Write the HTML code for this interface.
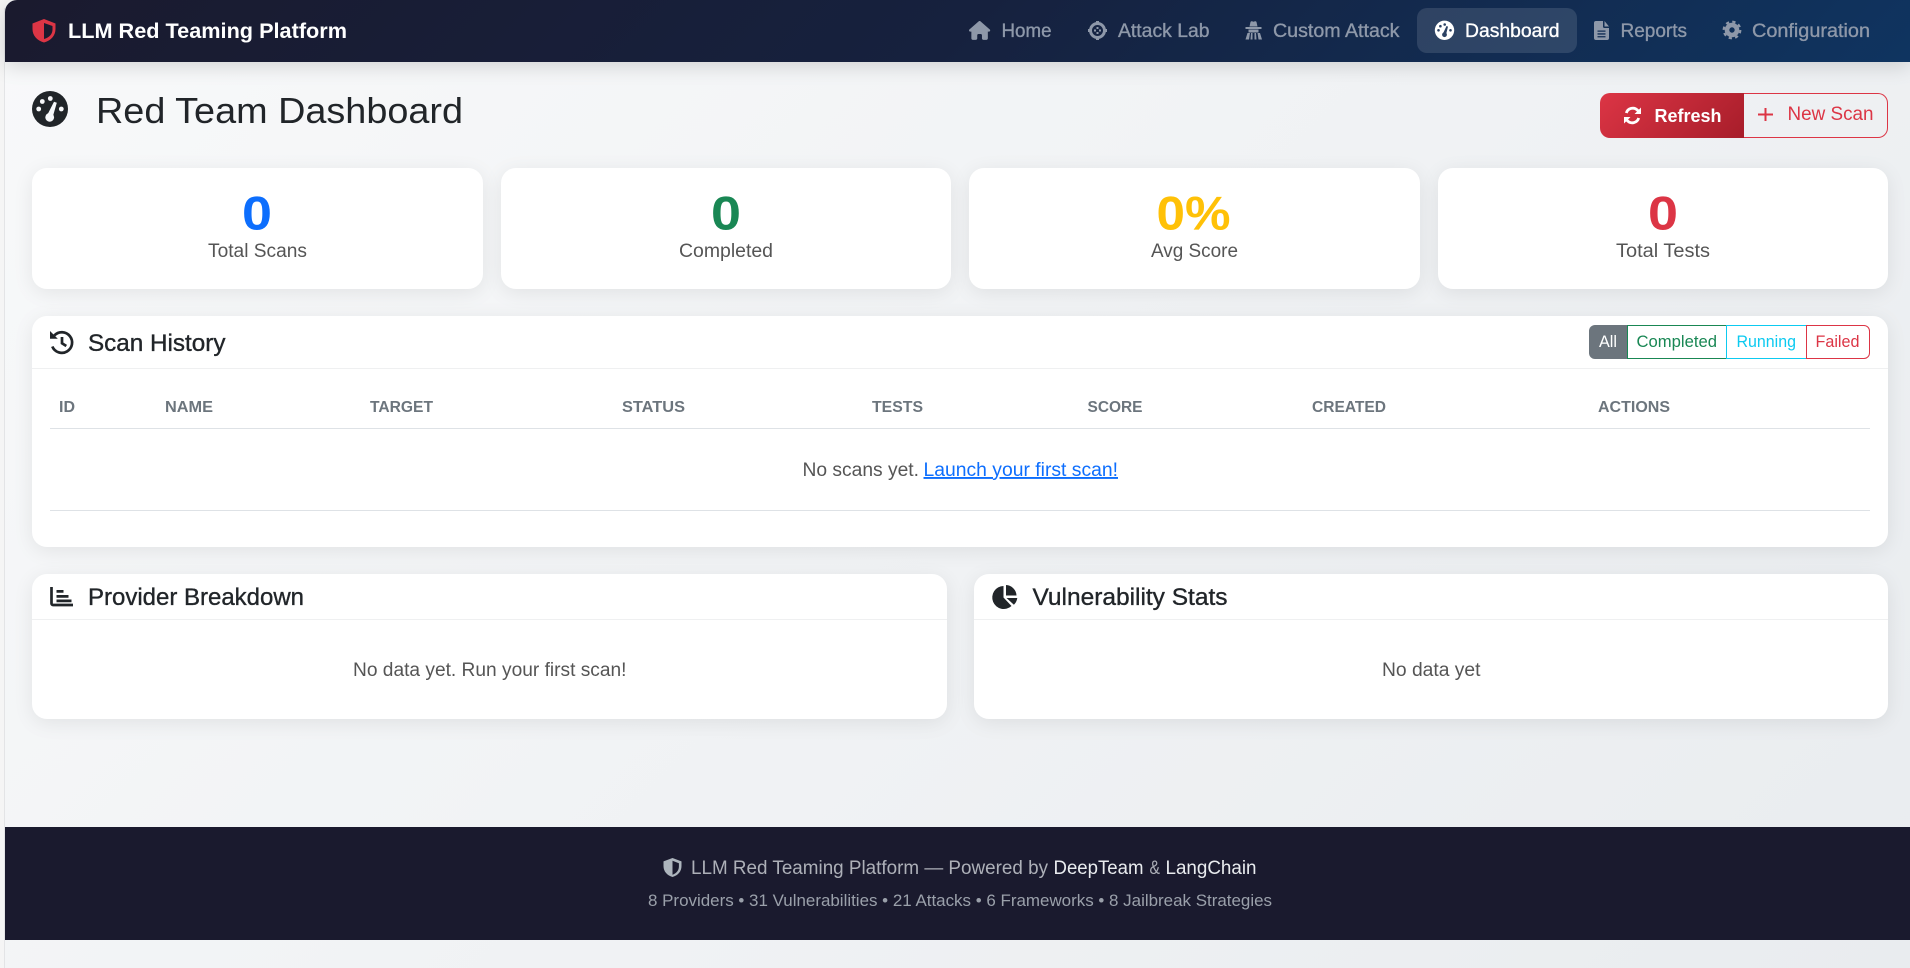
<!DOCTYPE html>
<html lang="en">
<head>
<meta charset="utf-8">
<title>LLM Red Teaming Platform</title>
<style>
html,body{margin:0;padding:0;width:1910px;height:968px;overflow:hidden;background:#f5f5f5}
.page{position:absolute;left:5px;top:0;width:1905px;height:968px;background:linear-gradient(135deg,#f8f9fa 0%,#e9ecef 100%);border-top-left-radius:8px;overflow:hidden}
.edge{position:absolute;left:4px;top:8px;width:1px;height:960px;background:#e3e4e6}
.box{position:absolute;box-sizing:border-box}
.nav{left:5px;top:0;width:1905px;height:62px;background:linear-gradient(135deg,#1a1a2e 0%,#16213e 50%,#0f3460 100%);border-top-left-radius:12px;box-shadow:0 4px 20px rgba(0,0,0,.15)}
.pill{left:1417px;top:8px;width:160px;height:45px;border-radius:10px;background:rgba(255,255,255,.12)}
.card{background:#fff;border-radius:15px;box-shadow:0 4px 20px rgba(0,0,0,.08)}
.hr{position:absolute;height:1px;background:#eff0f1}
.tl{position:absolute;height:1px;background:#dee2e6}
.foot{left:5px;top:827px;width:1905px;height:113px;background:#1a1a2e}
svg.top{position:absolute;left:0;top:0;width:1910px;height:968px}
text{font-family:"Liberation Sans",sans-serif;white-space:pre}
.m{stroke-width:.35px;paint-order:stroke}
.b{font-weight:700}
.th{font-size:15.5px;font-weight:700;fill:#6c757d}
.nv{font-size:19.5px;fill:#8e98a9;stroke:#8e98a9}
.ct{font-size:24px;fill:#212529;stroke:#212529}
.fl{font-size:16.5px}
.lb{font-size:19px;fill:#555}
.g{font-size:19px;fill:#555}
.ft{font-size:19px}
</style>
</head>
<body>
<div class="page"></div>
<div class="edge"></div>

<div class="box nav"></div>
<div class="box pill"></div>

<div class="box" style="left:1600px;top:93px;width:144px;height:45px;border-radius:10px 0 0 10px;background:linear-gradient(135deg,#dc3545,#a71d2a)"></div>
<div class="box" style="left:1744px;top:93px;width:144px;height:45px;border-radius:0 10px 10px 0;border:1px solid #dc3545;border-left-width:0"></div>

<div class="box card" style="left:32px;top:168px;width:451px;height:121px"></div>
<div class="box card" style="left:501px;top:168px;width:450px;height:121px"></div>
<div class="box card" style="left:969px;top:168px;width:451px;height:121px"></div>
<div class="box card" style="left:1438px;top:168px;width:450px;height:121px"></div>

<div class="box card" style="left:32px;top:316px;width:1856px;height:231px"></div>
<div class="hr" style="left:32px;top:368px;width:1856px"></div>
<div class="tl" style="left:50px;top:428px;width:1820px"></div>
<div class="tl" style="left:50px;top:510px;width:1820px"></div>

<div class="box" style="left:1589px;top:325px;width:38px;height:34px;background:#6c757d;border-radius:6px 0 0 6px"></div>
<div class="box" style="left:1627px;top:325px;width:100px;height:34px;border:1px solid #198754"></div>
<div class="box" style="left:1726px;top:325px;width:81px;height:34px;border:1px solid #0dcaf0"></div>
<div class="box" style="left:1806px;top:325px;width:64px;height:34px;border:1px solid #dc3545;border-radius:0 6px 6px 0"></div>

<div class="box card" style="left:32px;top:574px;width:915px;height:145px"></div>
<div class="hr" style="left:32px;top:619px;width:915px"></div>
<div class="box card" style="left:974px;top:574px;width:914px;height:145px"></div>
<div class="hr" style="left:974px;top:619px;width:914px"></div>

<div class="box foot"></div>

<svg class="top" viewBox="0 0 1910 968" xmlns="http://www.w3.org/2000/svg">
  <!-- brand -->
  <path d="M44 19 L55.500 23.500 V29 C55.500 35.500 51 40.500 44 42.500 C37 40.500 32.500 35.500 32.500 29 V23.500 Z" fill="#dc3545"/>
  <path d="M44 23 L52.500 26 V29.500 C52.500 34 49.500 37.500 44 39 Z" fill="#1a1a2e"/>
  <text x="68" y="38" class="b" font-size="21.500" fill="#fff" textLength="279" lengthAdjust="spacingAndGlyphs">LLM Red Teaming Platform</text>

  <!-- nav -->
  <path transform="translate(969 21) scale(.0368)" fill="#8e98a9" d="M575.800 255.500c0 18-15 32.100-32 32.100h-32l.7 160.200c0 2.700-.2 5.400-.5 8.100V472c0 22.100-17.900 40-40 40H456c-1.100 0-2.200 0-3.300-.1c-1.400 .1-2.800 .1-4.200 .1H416 392c-22.100 0-40-17.900-40-40V448 384c0-17.700-14.300-32-32-32H256c-17.700 0-32 14.300-32 32v64 24c0 22.100-17.900 40-40 40H160 128.100c-1.500 0-3-.1-4.500-.2c-1.200 .1-2.400 .2-3.600 .2H104c-22.100 0-40-17.900-40-40V360c0-.9 0-1.900 .1-2.800V287.600H32c-18 0-32-14-32-32.100c0-9 3-17 10-24L266.400 8c7-7 15-8 22-8s15 2 21 7L564.800 231.500c8 7 12 15 11 24z"/>
  <text x="1001.500" y="37" class="nv m" textLength="50" lengthAdjust="spacingAndGlyphs">Home</text>

  <g stroke="#8e98a9" fill="none">
    <circle cx="1097.500" cy="30.500" r="7" stroke-width="3"/>
    <path d="M1097.500 21v4M1097.500 36v4M1088 30.500h4M1103 30.500h4" stroke-width="3"/>
  </g>
  <path d="M1096.500 27h2v2h-2zM1096.500 32h2v2h-2zM1094 29.500h2v2h-2zM1099 29.500h2v2h-2z" fill="#8e98a9"/>
  <text x="1118" y="37" class="nv m" textLength="91.500" lengthAdjust="spacingAndGlyphs">Attack Lab</text>

  <path fill="#8e98a9" d="M1249.500 26.500l1-4.500q.3-1 1.500-.7l1.500.5 1.500-.5q1.200-.3 1.500.7l1 4.500zM1245.500 27h16v2h-16zM1248.500 29.500h10v3h-10zM1245.500 39.500l2-6.500h2.500l-1 6.500zM1250.500 39.500l.5-6.500h1.500v6.500zM1254.500 39.500v-6.500h1.500l.5 6.500zM1258.500 39.500l-1-6.500h2.500l2 6.500z"/>
  <text x="1273" y="37" class="nv m" textLength="126.500" lengthAdjust="spacingAndGlyphs">Custom Attack</text>

  <circle cx="1444.500" cy="30.300" r="9.700" fill="#fff"/>
  <g fill="#2b4163">
    <circle cx="1444.700" cy="24.500" r="1.300"/><circle cx="1440.400" cy="26.200" r="1.300"/><circle cx="1438.500" cy="30.300" r="1.300"/><circle cx="1450.500" cy="30.300" r="1.300"/>
    <circle cx="1444.500" cy="34.700" r="2.400"/>
    <path d="M1443 33.500l3.500-7.500 1.500.6-2 8z"/>
  </g>
  <text x="1465" y="37" class="m" font-size="19.500" fill="#fff" stroke="#fff" textLength="94.500" lengthAdjust="spacingAndGlyphs">Dashboard</text>

  <path fill="#8e98a9" fill-rule="evenodd" d="M1596 21h7v5.500a1.500 1.500 0 0 0 1.500 1.500h4.500v10a2 2 0 0 1-2 2h-11a2 2 0 0 1-2-2v-15a2 2 0 0 1 2-2zM1604.500 21l4.500 5.500h-4.500zM1597.500 30.500v1.300h8v-1.300zM1597.500 33.300v1.300h8v-1.300zM1597.500 36.100v1.300h8v-1.300z"/>
  <text x="1620.500" y="37" class="nv m" textLength="66.500" lengthAdjust="spacingAndGlyphs">Reports</text>

  <circle cx="1732" cy="30" r="5" fill="none" stroke="#8e98a9" stroke-width="4.600"/>
  <circle cx="1732" cy="30" r="8.300" fill="none" stroke="#8e98a9" stroke-width="2.200" stroke-dasharray="3.260 3.260"/>
  <text x="1752" y="37" class="nv m" textLength="118" lengthAdjust="spacingAndGlyphs">Configuration</text>

  <!-- heading -->
  <circle cx="50" cy="109" r="18" fill="#212529"/>
  <g fill="#f7f8fa">
    <circle cx="50.300" cy="98.500" r="2.400"/><circle cx="42.300" cy="101.500" r="2.400"/><circle cx="38.700" cy="109" r="2.400"/><circle cx="61.300" cy="109" r="2.400"/>
    <circle cx="49.700" cy="117.300" r="4.400"/>
    <path d="M47 115.500l7-13.800 2.800 1-4.300 15z"/>
  </g>
  <text x="96" y="123" font-size="36.300" fill="#212529" textLength="367" lengthAdjust="spacingAndGlyphs">Red Team Dashboard</text>

  <!-- buttons -->
  <g fill="none" stroke="#fff" stroke-width="2.800">
    <path d="M1626.300 113a6.700 6.700 0 0 1 11.300-2.700l1.400 1.400"/>
    <path d="M1638.700 118a6.700 6.700 0 0 1-11.300 2.700l-1.400-1.400"/>
  </g>
  <path d="M1641 107.500v6.500h-6.500zM1624 123.500v-6.500h6.500z" fill="#fff"/>
  <text x="1654.500" y="122" class="b" font-size="18.500" fill="#fff" textLength="67" lengthAdjust="spacingAndGlyphs">Refresh</text>
  <path d="M1765.500 108v13M1758 114.500h15" stroke="#dc3545" stroke-width="2" fill="none"/>
  <text x="1787.500" y="120" font-size="19" fill="#dc3545" textLength="86" lengthAdjust="spacingAndGlyphs">New Scan</text>

  <!-- stats -->
  <text x="242" y="229.500" class="b" font-size="47" fill="#0d6efd" textLength="30" lengthAdjust="spacingAndGlyphs">0</text>
  <text x="711" y="229.500" class="b" font-size="47" fill="#198754" textLength="30" lengthAdjust="spacingAndGlyphs">0</text>
  <text x="1156.500" y="229.500" class="b" font-size="47" fill="#ffc107" textLength="74" lengthAdjust="spacingAndGlyphs">0%</text>
  <text x="1648" y="229.500" class="b" font-size="47" fill="#dc3545" textLength="30" lengthAdjust="spacingAndGlyphs">0</text>
  <text x="208" y="257" class="lb" textLength="99" lengthAdjust="spacingAndGlyphs">Total Scans</text>
  <text x="679" y="257" class="lb" textLength="94" lengthAdjust="spacingAndGlyphs">Completed</text>
  <text x="1151" y="257" class="lb" textLength="87" lengthAdjust="spacingAndGlyphs">Avg Score</text>
  <text x="1616" y="257" class="lb" textLength="94" lengthAdjust="spacingAndGlyphs">Total Tests</text>

  <!-- scan history -->
  <g fill="none" stroke="#212529" stroke-width="2.700">
    <path d="M54.300 335.500a10.300 10.300 0 1 1-2 11"/>
    <path d="M62 337v6.300l4.300 2.700"/>
  </g>
  <path d="M50 331v7.800h7.800z" fill="#212529"/>
  <text x="88" y="351" class="ct m" textLength="137.500" lengthAdjust="spacingAndGlyphs">Scan History</text>

  <text x="1599" y="347" class="fl" fill="#fff" textLength="18" lengthAdjust="spacingAndGlyphs">All</text>
  <text x="1636.500" y="347" class="fl" fill="#198754" textLength="80.500" lengthAdjust="spacingAndGlyphs">Completed</text>
  <text x="1736.500" y="347" class="fl" fill="#0dcaf0" textLength="59.500" lengthAdjust="spacingAndGlyphs">Running</text>
  <text x="1815.500" y="347" class="fl" fill="#dc3545" textLength="44" lengthAdjust="spacingAndGlyphs">Failed</text>

  <text x="59" y="412" class="th" textLength="16" lengthAdjust="spacingAndGlyphs">ID</text>
  <text x="165" y="412" class="th" textLength="48" lengthAdjust="spacingAndGlyphs">NAME</text>
  <text x="370" y="412" class="th" textLength="63" lengthAdjust="spacingAndGlyphs">TARGET</text>
  <text x="622" y="412" class="th" textLength="63" lengthAdjust="spacingAndGlyphs">STATUS</text>
  <text x="872" y="412" class="th" textLength="51" lengthAdjust="spacingAndGlyphs">TESTS</text>
  <text x="1087.500" y="412" class="th" textLength="55" lengthAdjust="spacingAndGlyphs">SCORE</text>
  <text x="1312" y="412" class="th" textLength="74" lengthAdjust="spacingAndGlyphs">CREATED</text>
  <text x="1598" y="412" class="th" textLength="72" lengthAdjust="spacingAndGlyphs">ACTIONS</text>

  <text x="802.500" y="476" class="g" textLength="116.500" lengthAdjust="spacingAndGlyphs">No scans yet.</text>
  <text x="923.500" y="476" font-size="19" fill="#0d6efd" text-decoration="underline" textLength="194.500" lengthAdjust="spacingAndGlyphs">Launch your first scan!</text>

  <!-- provider -->
  <path d="M51.500 587v16.500a1.500 1.500 0 0 0 1.500 1.500h20" fill="none" stroke="#212529" stroke-width="2.700"/>
  <path d="M56.500 590h7v2.700h-7zM56.500 595h12v2.700h-12zM56.500 599.500h15v2.700h-15z" fill="#212529"/>
  <text x="88" y="605" class="ct m" textLength="216" lengthAdjust="spacingAndGlyphs">Provider Breakdown</text>
  <text x="353" y="676" class="g" textLength="273.500" lengthAdjust="spacingAndGlyphs">No data yet. Run your first scan!</text>

  <!-- vuln -->
  <path fill="#212529" d="M1003.500 586v11.500l8 8.500a11.500 11.500 0 1 1-8-20z"/>
  <path fill="#212529" d="M1006 585a11 11 0 0 1 10.500 10.500h-10.500zM1006.500 598h10.800a11.500 11.500 0 0 1-3.400 6.700z"/>
  <text x="1032.500" y="605" class="ct m" textLength="195" lengthAdjust="spacingAndGlyphs">Vulnerability Stats</text>
  <text x="1382" y="676" class="g" textLength="98.500" lengthAdjust="spacingAndGlyphs">No data yet</text>

  <!-- footer -->
  <path d="M672.500 858l9 3.400v4.600c0 5.500-3.500 9.300-9 11c-5.500-1.700-9-5.500-9-11v-4.600z" fill="#adb5bd"/>
  <path d="M672.500 860.800l6.400 2.400v3.200c0 4-2.400 6.900-6.400 8.300z" fill="#1a1a2e"/>
  <text x="691" y="874" class="ft" fill="#adb0b8" textLength="357" lengthAdjust="spacingAndGlyphs">LLM Red Teaming Platform — Powered by</text>
  <text x="1053.500" y="874" class="ft" fill="#e9ecef" textLength="90" lengthAdjust="spacingAndGlyphs">DeepTeam</text>
  <text x="1149.500" y="874" class="ft" fill="#adb0b8" textLength="10.500" lengthAdjust="spacingAndGlyphs">&amp;</text>
  <text x="1165.500" y="874" class="ft" fill="#e9ecef" textLength="91" lengthAdjust="spacingAndGlyphs">LangChain</text>
  <text x="648" y="906" font-size="16.300" fill="#9aa0aa" textLength="624" lengthAdjust="spacingAndGlyphs">8 Providers • 31 Vulnerabilities • 21 Attacks • 6 Frameworks • 8 Jailbreak Strategies</text>
</svg>
</body>
</html>
